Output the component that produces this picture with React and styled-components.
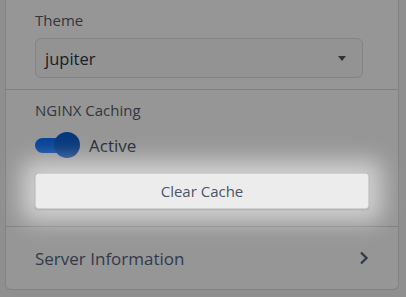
import styled, { createGlobalStyle } from 'styled-components';

const GlobalStyle = createGlobalStyle`
  html, body {
    margin: 0;
    padding: 0;
    background: #eeeeee;
    font-family: 'Open Sans', 'Noto Sans', sans-serif;
  }
`;

const Page = styled.div`
  position: relative;
  height: 297px;
  overflow: hidden;
`;

const Panel = styled.div`
  margin-left: 5px;
  width: 392px;
  background: #fafafa;
  border: 1px solid #d9d9d9;
  border-top: none;
  border-radius: 0 0 6px 6px;
`;

const Section = styled.div`
  padding: ${({ $pad }) => $pad};
  border-bottom: ${({ $last }) => ($last ? 'none' : '1px solid #d4d4d4')};
`;

const Label = styled.div`
  font-size: 15px;
  line-height: 20px;
  color: #555a6a;
`;

const Select = styled.div`
  box-sizing: border-box;
  margin-top: 8px;
  width: 328px;
  height: 40px;
  border: 1px solid #dcdcdc;
  border-radius: 6px;
  background: #f5f5f5;
  display: flex;
  align-items: center;
  justify-content: space-between;
  padding: 0 16px 0 9px;
  font-size: 16.5px;
  color: #2c3242;
`;

const Caret = styled.span`
  width: 0;
  height: 0;
  border-left: 4px solid transparent;
  border-right: 4px solid transparent;
  border-top: 5px solid #555;
`;

const ToggleRow = styled.div`
  margin-top: 12px;
  height: 26px;
  display: flex;
  align-items: center;
  gap: 9px;
`;

const Track = styled.div`
  position: relative;
  width: 45px;
  height: 26px;
  display: flex;
  align-items: center;

  &::before {
    content: '';
    width: 36px;
    height: 15px;
    border-radius: 8px;
    background: ${({ $on }) => ($on ? '#0d6efd' : '#bbb')};
  }

  &::after {
    content: '';
    position: absolute;
    right: 0;
    top: 0;
    width: 26px;
    height: 26px;
    border-radius: 50%;
    background: ${({ $on }) => ($on ? '#0a5ccf' : '#888')};
  }
`;

const ToggleText = styled.span`
  font-size: 17px;
  color: #3a4050;
`;

const Spotlight = styled.div`
  position: relative;
  z-index: 2;
  margin-top: 15px;
  border-radius: 3px;
  box-shadow: 0 0 22px 13px rgba(255, 255, 255, 0.55);
`;

const Button = styled.button`
  display: block;
  width: 334px;
  height: 36px;
  border: 1px solid #cfcfcf;
  border-radius: 3px;
  background: #ececec;
  font-family: inherit;
  font-size: 15px;
  color: #4d5568;
  box-shadow: 0 1px 2px rgba(0, 0, 0, 0.12);
`;

const NavRow = styled.div`
  height: 62px;
  display: flex;
  align-items: center;
  justify-content: space-between;
  padding: 0 29px;
  font-size: 17px;
  color: #56627c;
`;

const Overlay = styled.div`
  position: absolute;
  inset: 0;
  z-index: 1;
  background: rgba(0, 0, 0, 0.4);
  pointer-events: none;
`;

function Chevron() {
  return (
    <svg width='10' height='14' viewBox='0 0 10 14'>
      <path d='M2 1.5 L7.5 7 L2 12.5' fill='none' stroke='#56627c' strokeWidth='2.4' />
    </svg>
  );
}

export default function App() {
  return (
    <Page>
      <GlobalStyle />
      <Panel>
        <Section $pad='10px 29px 11px'>
          <Label>Theme</Label>
          <Select>
            <span>jupiter</span>
            <Caret />
          </Select>
        </Section>
        <Section $pad='10px 29px 17px'>
          <Label>NGINX Caching</Label>
          <ToggleRow>
            <Track $on />
            <ToggleText>Active</ToggleText>
          </ToggleRow>
          <Spotlight>
            <Button>Clear Cache</Button>
          </Spotlight>
        </Section>
        <Section $last>
          <NavRow>
            <span>Server Information</span>
            <Chevron />
          </NavRow>
        </Section>
      </Panel>
      <Overlay />
    </Page>
  );
}
